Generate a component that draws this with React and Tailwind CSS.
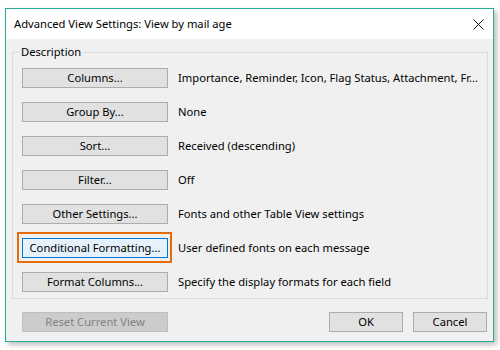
import React from "react";

const rows = [
  ["Columns...", "Importance, Reminder, Icon, Flag Status, Attachment, Fr..."],
  ["Group By...", "None"],
  ["Sort...", "Received (descending)"],
  ["Filter...", "Off"],
  ["Other Settings...", "Fonts and other Table View settings"],
  ["Conditional Formatting...", "User defined fonts on each message", true],
  ["Format Columns...", "Specify the display formats for each field"],
];

function Btn({ children, active, disabled, className = "" }) {
  const base = "h-[20px] flex items-center justify-center border text-[11.2px] leading-none";
  const look = disabled
    ? "bg-[#cccccc] border-[#bfbfbf] text-[#838383]"
    : active
    ? "bg-[#e5f1fb] border-[#0078d7] text-black"
    : "bg-[#e1e1e1] border-[#adadad] text-black";
  return <div className={`${base} ${look} ${className}`}>{children}</div>;
}

export default function App() {
  return (
    <div
      className="w-[500px] h-[350px] bg-white overflow-hidden pt-[8px] pl-[5px]"
      style={{ fontFamily: '"Noto Sans", "Open Sans", sans-serif' }}
    >
      <div className="w-[489px] h-[334px] border border-[#2aab95] bg-[#f0f0f0] flex flex-col shadow-[3px_3px_5px_rgba(0,0,0,0.25)]">
        <div className="h-[30px] bg-white flex items-center justify-between pl-[8px] pr-[9px]">
          <span className="text-[11.2px] text-black">Advanced View Settings: View by mail age</span>
          <svg width="11" height="11" viewBox="0 0 11 11">
            <path d="M0.5 0.5 L10.5 10.5 M10.5 0.5 L0.5 10.5" stroke="#111" strokeWidth="1" />
          </svg>
        </div>
        <div className="flex-1 flex flex-col pt-[13px] pl-[6px] pr-[5px] pb-[9px]">
          <div className="relative border border-[#dcdcdc] pt-[15px] pl-[9px] pb-[6px] flex flex-col gap-[14px]">
            <span className="absolute left-[6px] -top-[9px] px-[2px] bg-[#f0f0f0] text-[11.2px] leading-[16px] text-black">
              Description
            </span>
            {rows.map(([b, d, act]) => (
              <div key={b} className="flex items-center">
                <div className="relative">
                  <Btn active={act} className="w-[146px]">{b}</Btn>
                  {act && (
                    <span className="absolute -left-[5px] -top-[6px] w-[155px] h-[31px] border-2 border-[#e46c0a]" />
                  )}
                </div>
                <span className="ml-[10px] text-[11.2px] text-black whitespace-nowrap">{d}</span>
              </div>
            ))}
          </div>
          <div className="mt-[13px] flex items-center">
            <div className="pl-[10px]">
              <Btn disabled className="w-[146px]">Reset Current View</Btn>
            </div>
            <div className="ml-auto flex gap-[10px] pr-[1px]">
              <Btn className="w-[74px]">OK</Btn>
              <Btn className="w-[74px]">Cancel</Btn>
            </div>
          </div>
        </div>
      </div>
    </div>
  );
}
